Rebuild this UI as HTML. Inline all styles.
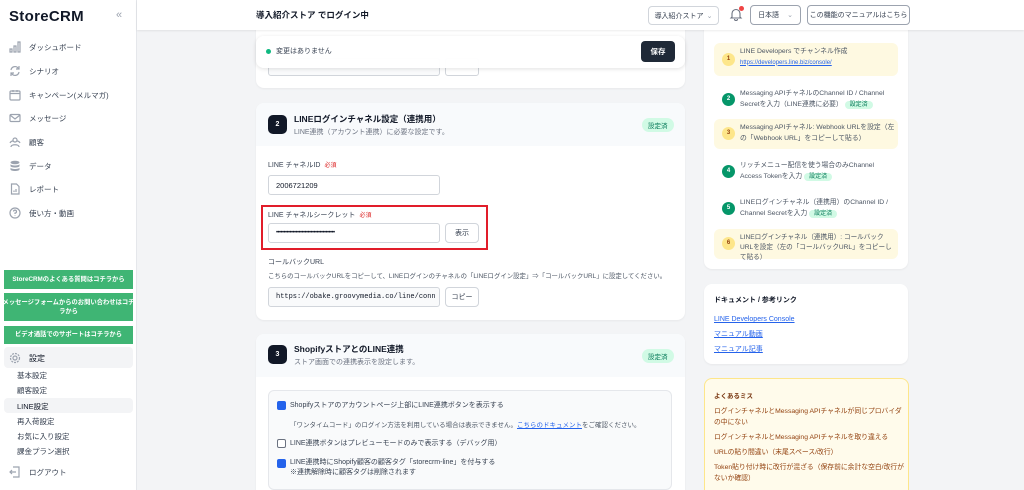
<!DOCTYPE html>
<html><head><meta charset="utf-8"><style>
*{box-sizing:border-box;margin:0;padding:0}
html,body{width:1024px;height:490px;overflow:hidden}
body{background:#f3f4f6;font-family:"Liberation Sans","Noto Sans CJK JP",sans-serif;color:#374151;position:relative}
.abs{position:absolute}
.sb{left:0;top:0;width:137px;height:490px;background:#fff;border-right:1px solid #e5e7eb}
.logo{left:9px;top:8px;font-size:15px;font-weight:bold;color:#111827;letter-spacing:.3px}
.nav{left:9px;font-size:7.5px;color:#374151;display:flex;align-items:center;gap:8px}
.nav svg{width:12px;height:12px;stroke:#9ca3af;fill:none;stroke-width:1.2}
.gb{left:4px;width:129px;background:#3fb574;color:#fff;font-size:6.3px;font-weight:bold;display:flex;align-items:center;justify-content:center;text-align:center;line-height:1.45;white-space:nowrap}
.sub{left:17px;font-size:7.5px;color:#374151}
.top{left:137px;top:0;width:887px;height:30px;background:#fff;box-shadow:0 1px 2px rgba(0,0,0,.08);z-index:5}
.btn{border:1px solid #9ca3af;border-radius:4px;background:#fff;font-size:7px;display:flex;align-items:center;justify-content:center;color:#374151;white-space:nowrap}
.card{background:#fff;border-radius:8px;box-shadow:0 1px 2px rgba(0,0,0,.05)}
.inp{border:1px solid #d1d5db;border-radius:3px;background:#fff;font-size:7.5px;display:flex;align-items:center;padding-left:7px;color:#111827}
.lbl{font-size:7px;color:#374151}
.req{color:#dc2626;font-size:6px;margin-left:4px}
.badge{background:#d1fae5;color:#047857;font-size:6.5px;border-radius:9px;padding:2px 6px}
.num{width:19px;height:19px;border-radius:5px;background:#111827;color:#fff;font-size:7px;font-weight:bold;display:flex;align-items:center;justify-content:center}
.step{left:714px;width:184px;border-radius:6px;font-size:6.8px;line-height:1.55;color:#4b5563;padding:4px 2px 4px 26px}
.step .c{position:absolute;left:8px;width:13px;height:13px;border-radius:50%;font-size:6px;font-weight:bold;display:flex;align-items:center;justify-content:center}
.y{background:#fef9e1}.y .c{background:#fde68a;color:#92400e}
.g .c{background:#059669;color:#fff}
.sb2{background:#d1fae5;color:#047857;font-size:6px;border-radius:7px;padding:1px 5px}
a{color:#2563eb;text-decoration:underline}
.cb{width:9px;height:9px;border-radius:2px}
</style></head><body>
<div class="abs sb"></div>
<div class="abs logo">StoreCRM</div>
<div class="abs" style="left:116px;top:9px;font-size:11px;color:#9ca3af">«</div>

<div class="abs nav" style="top:41px"><svg viewBox="0 0 12 12"><path d="M1 11V8h2v3zM5 11V5h2v6zM9 11V1h2v10z"/></svg>ダッシュボード</div>
<div class="abs nav" style="top:65px"><svg viewBox="0 0 12 12"><path d="M2 5a4 4 0 0 1 7-2l1 1M10 7a4 4 0 0 1-7 2L2 8M10 1v3H7M2 11V8h3"/></svg>シナリオ</div>
<div class="abs nav" style="top:89px"><svg viewBox="0 0 12 12"><rect x="1" y="2" width="10" height="9" rx="1"/><path d="M1 4.5h10M4 1v2M8 1v2"/></svg>キャンペーン(メルマガ)</div>
<div class="abs nav" style="top:112px"><svg viewBox="0 0 12 12"><rect x="1" y="2.5" width="10" height="7" rx="1"/><path d="M1 3l5 4 5-4"/></svg>メッセージ</div>
<div class="abs nav" style="top:136px"><svg viewBox="0 0 12 12"><circle cx="6" cy="4" r="2"/><path d="M2 11c0-3 8-3 8 0M1 7c1-2 3-2 3-2M11 7c-1-2-3-2-3-2"/></svg>顧客</div>
<div class="abs nav" style="top:160px"><svg viewBox="0 0 12 12" style="fill:#9ca3af;stroke:none"><ellipse cx="6" cy="2.5" rx="4.5" ry="1.7"/><path d="M1.5 4c0 2 9 2 9 0v2c0 2-9 2-9 0zM1.5 7.5c0 2 9 2 9 0v2c0 2-9 2-9 0z"/></svg>データ</div>
<div class="abs nav" style="top:183px"><svg viewBox="0 0 12 12"><path d="M2.5 1h5l2.5 2.5V11h-7.5zM5 9V7.5M7 9V6"/></svg>レポート</div>
<div class="abs nav" style="top:207px"><svg viewBox="0 0 12 12"><circle cx="6" cy="6" r="5"/><path d="M4.5 4.5a1.5 1.5 0 1 1 1.5 1.6V7M6 8.5v.5"/></svg>使い方・動画</div>

<div class="abs gb" style="top:270px;height:19px">StoreCRMのよくある質問はコチラから</div>
<div class="abs gb" style="top:293px;height:28px">メッセージフォームからのお問い合わせはコチ<br>ラから</div>
<div class="abs gb" style="top:326px;height:18px">ビデオ通話でのサポートはコチラから</div>
<div class="abs" style="left:4px;top:347px;width:129px;height:21px;background:#f3f4f6;border-radius:4px"></div>
<div class="abs nav" style="top:352px;font-size:8px;color:#111827"><svg viewBox="0 0 12 12"><circle cx="6" cy="6" r="2"/><circle cx="6" cy="6" r="4.5" stroke-dasharray="2 1"/></svg>設定</div>
<div class="abs" style="left:4px;top:398px;width:129px;height:15px;background:#f3f4f6;border-radius:4px"></div>
<div class="abs sub" style="top:370px">基本設定</div>
<div class="abs sub" style="top:385px">顧客設定</div>
<div class="abs sub" style="top:401px;color:#111827">LINE設定</div>
<div class="abs sub" style="top:416px">再入荷設定</div>
<div class="abs sub" style="top:431px">お気に入り設定</div>
<div class="abs sub" style="top:446px">課金プラン選択</div>
<div class="abs nav" style="top:466px"><svg viewBox="0 0 12 12"><path d="M4 1h6v10H4M1 6h6M3 4L1 6l2 2"/></svg>ログアウト</div>

<div class="abs card" style="left:256px;top:10px;width:429px;height:78px"></div>
<div class="abs inp" style="left:268px;top:58px;width:172px;height:18px;background:#f9fafb"></div>
<div class="abs inp" style="left:445px;top:58px;width:34px;height:18px"></div>

<div class="abs top"></div>
<div class="abs" style="left:256px;top:9px;font-size:8.5px;color:#111827;font-weight:bold;z-index:6">導入紹介ストア でログイン中</div>
<div class="abs btn" style="left:648px;top:6px;width:71px;height:19px;z-index:6;border-color:#d1d5db">導入紹介ストア <span style="margin-left:3px;color:#9ca3af">⌄</span></div>
<div class="abs" style="left:729px;top:7px;z-index:6"><svg width="14" height="14" viewBox="0 0 14 14" fill="none" stroke="#6b7280" stroke-width="1.1"><path d="M3 10V6.5a4 4 0 0 1 8 0V10l1 1H2zM5.5 12a1.5 1.5 0 0 0 3 0"/></svg></div>
<div class="abs" style="left:739px;top:6px;width:5px;height:5px;border-radius:50%;background:#ef4444;z-index:6"></div>
<div class="abs btn" style="left:750px;top:5px;width:51px;height:20px;z-index:6">日本語 <span style="margin-left:8px;color:#9ca3af">⌄</span></div>
<div class="abs btn" style="left:807px;top:5px;width:103px;height:20px;z-index:6">この機能のマニュアルはこちら</div>

<div class="abs card" style="left:256px;top:36px;width:429px;height:32px;box-shadow:0 1px 4px rgba(0,0,0,.12);background:rgba(255,255,255,.97)"></div>
<div class="abs" style="left:266px;top:49px;width:5px;height:5px;border-radius:50%;background:#10b981"></div>
<div class="abs" style="left:276px;top:46px;font-size:7px;color:#374151">変更はありません</div>
<div class="abs" style="left:641px;top:41px;width:34px;height:21px;background:#1f2937;color:#fff;border-radius:4px;font-size:7.5px;font-weight:bold;display:flex;align-items:center;justify-content:center">保存</div>

<div class="abs card" style="left:256px;top:103px;width:429px;height:217px;overflow:hidden"><div style="height:43px;background:#f8fafc"></div></div>
<div class="abs num" style="left:268px;top:115px">2</div>
<div class="abs" style="left:294px;top:113px;font-size:8.5px;font-weight:bold;color:#111827">LINEログインチャネル設定（連携用）</div>
<div class="abs" style="left:294px;top:127px;font-size:7px;color:#6b7280">LINE連携（アカウント連携）に必要な設定です。</div>
<div class="abs badge" style="left:642px;top:118px">設定済</div>
<div class="abs lbl" style="left:268px;top:160px">LINE チャネルID<span class="req">必須</span></div>
<div class="abs inp" style="left:268px;top:175px;width:172px;height:20px">2006721209</div>
<div class="abs" style="left:261px;top:205px;width:227px;height:45px;border:2px solid #e11d2a"></div>
<div class="abs lbl" style="left:268px;top:210px">LINE チャネルシークレット<span class="req">必須</span></div>
<div class="abs inp" style="left:268px;top:223px;width:172px;height:20px;font-size:6px;letter-spacing:-.6px">•••••••••••••••••••••••••••••••••••••••</div>
<div class="abs btn" style="left:445px;top:223px;width:34px;height:20px;border-color:#d1d5db">表示</div>
<div class="abs lbl" style="left:268px;top:257px">コールバックURL</div>
<div class="abs" style="left:268px;top:271px;font-size:6.4px;color:#4b5563;white-space:nowrap">こちらのコールバックURLをコピーして、LINEログインのチャネルの「LINEログイン設定」⇒「コールバックURL」に設定してください。</div>
<div class="abs inp" style="left:268px;top:287px;width:172px;height:20px;background:#f9fafb;font-family:'Liberation Mono',monospace;font-size:7px;overflow:hidden;white-space:nowrap">https://obake.groovymedia.co/line/conn</div>
<div class="abs btn" style="left:445px;top:287px;width:34px;height:20px;border-color:#d1d5db">コピー</div>

<div class="abs card" style="left:256px;top:334px;width:429px;height:170px;overflow:hidden"><div style="height:43px;background:#f8fafc"></div></div>
<div class="abs num" style="left:268px;top:345px">3</div>
<div class="abs" style="left:294px;top:343px;font-size:8.5px;font-weight:bold;color:#111827">ShopifyストアとのLINE連携</div>
<div class="abs" style="left:294px;top:357px;font-size:7px;color:#6b7280">ストア画面での連携表示を設定します。</div>
<div class="abs badge" style="left:642px;top:349px">設定済</div>
<div class="abs" style="left:268px;top:390px;width:404px;height:100px;background:#f9fafb;border:1px solid #e5e7eb;border-radius:6px"></div>
<div class="abs cb" style="left:277px;top:401px;background:#2563eb"></div>
<div class="abs" style="left:290px;top:400px;font-size:7px">Shopifyストアのアカウントページ上部にLINE連携ボタンを表示する</div>
<div class="abs" style="left:290px;top:419px;font-size:6.5px;color:#4b5563;white-space:nowrap">「ワンタイムコード」のログイン方法を利用している場合は表示できません。<a>こちらのドキュメント</a>をご確認ください。</div>
<div class="abs cb" style="left:277px;top:439px;border:1px solid #6b7280;background:#fff"></div>
<div class="abs" style="left:290px;top:438px;font-size:7px">LINE連携ボタンはプレビューモードのみで表示する（デバッグ用）</div>
<div class="abs cb" style="left:277px;top:459px;background:#2563eb"></div>
<div class="abs" style="left:290px;top:458px;font-size:7px;line-height:1.45">LINE連携時にShopify顧客の顧客タグ「storecrm-line」を付与する<br>※連携解除時に顧客タグは削除されます</div>

<div class="abs card" style="left:704px;top:10px;width:204px;height:259px"></div>
<div class="abs step y" style="top:43px;height:33px"><span class="c" style="top:10px">1</span>LINE Developers でチャンネル作成<br><a style="font-size:6px">https://developers.line.biz/console/</a></div>
<div class="abs step g" style="top:85px;height:30px"><span class="c" style="top:8px">2</span>Messaging APIチャネルのChannel ID / Channel Secretを入力（LINE連携に必要） <span class="sb2">設定済</span></div>
<div class="abs step y" style="top:119px;height:30px"><span class="c" style="top:8px">3</span>Messaging APIチャネル: Webhook URLを設定（左の「Webhook URL」をコピーして貼る）</div>
<div class="abs step g" style="top:157px;height:30px"><span class="c" style="top:8px">4</span>リッチメニュー配信を使う場合のみChannel Access Tokenを入力 <span class="sb2">設定済</span></div>
<div class="abs step g" style="top:194px;height:30px"><span class="c" style="top:8px">5</span>LINEログインチャネル（連携用）のChannel ID / Channel Secretを入力 <span class="sb2">設定済</span></div>
<div class="abs step y" style="top:229px;height:30px;font-size:6.6px"><span class="c" style="top:8px">6</span>LINEログインチャネル（連携用）: コールバックURLを設定（左の「コールバックURL」をコピーして貼る）</div>

<div class="abs card" style="left:704px;top:284px;width:204px;height:80px"></div>
<div class="abs" style="left:714px;top:295px;font-size:7px;font-weight:bold;color:#111827">ドキュメント / 参考リンク</div>
<div class="abs" style="left:714px;top:312px;font-size:7px;line-height:15px"><a>LINE Developers Console</a><br><a>マニュアル動画</a><br><a>マニュアル記事</a></div>

<div class="abs" style="left:704px;top:378px;width:205px;height:130px;background:#fffbeb;border:1px solid #fde68a;border-radius:8px"></div>
<div class="abs" style="left:714px;top:390px;font-size:6.5px;font-weight:bold;color:#78350f">よくあるミス</div>
<div class="abs" style="left:714px;top:406px;width:192px;font-size:6.8px;line-height:11px;color:#92400e">
<div style="margin-bottom:4px">ログインチャネルとMessaging APIチャネルが同じプロバイダの中にない</div>
<div style="margin-bottom:4px">ログインチャネルとMessaging APIチャネルを取り違える</div>
<div style="margin-bottom:4px">URLの貼り間違い（末尾スペース/改行）</div>
<div>Token貼り付け時に改行が混ざる（保存前に余計な空白/改行がないか確認）</div></div>
</body></html>
